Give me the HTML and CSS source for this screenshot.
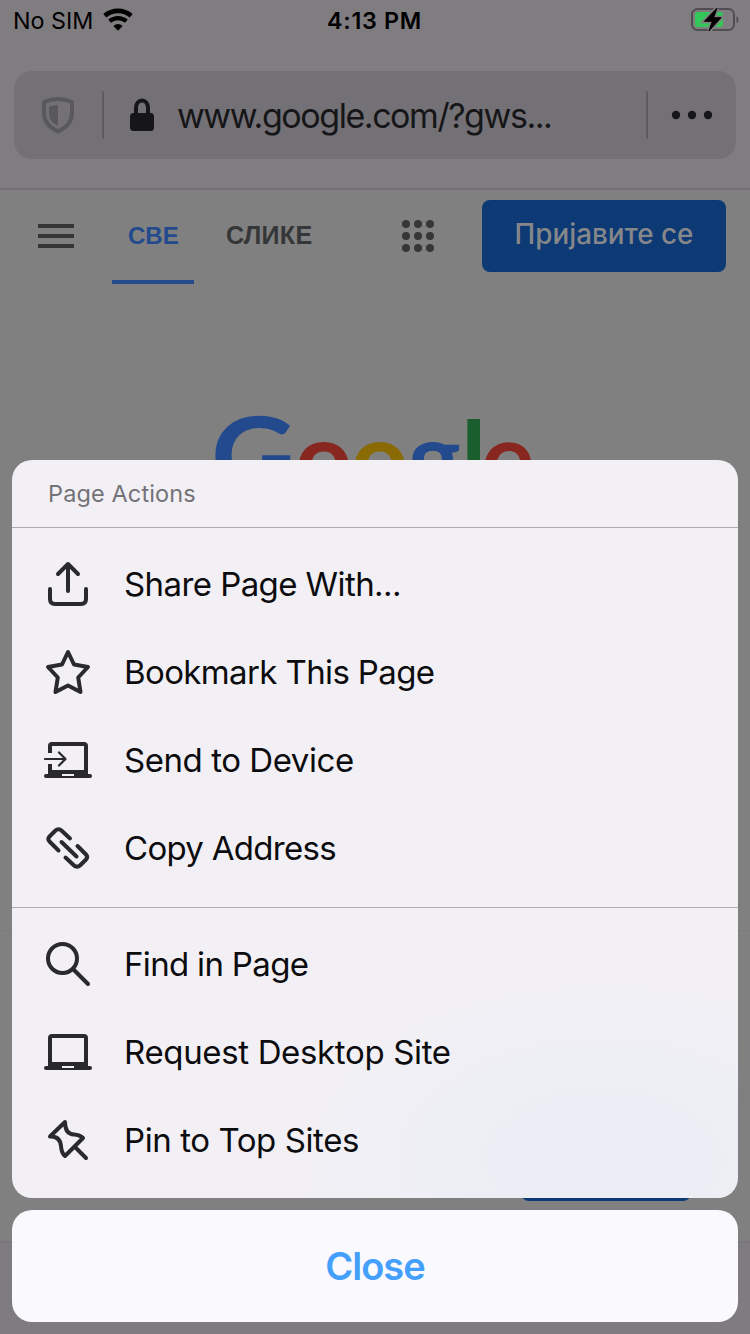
FILE: index.html
```html
<!DOCTYPE html>
<html lang="en">
<head>
<meta charset="utf-8">
<title>Page Actions</title>
<link rel="stylesheet" href="styles.css">
</head>
<body>
<div class="screen">
  <header class="browser">
    <div class="status">
      <div class="carrier"><span>No SIM</span>
        <svg width="32" height="24" viewBox="0 0 32 24"><path d="M1.8 7.800a20 20 0 0 1 26.400 0" fill="none" stroke="#000" stroke-width="4.600"/><path d="M6.600 13.200a13 13 0 0 1 16.800 0" fill="none" stroke="#000" stroke-width="4.200"/><path d="M10.300 18q4.700-3.800 9.400 0L15 22.800z"/></svg>
      </div>
      <div class="clock">4:13 PM</div>
      <svg class="battery" width="50" height="26" viewBox="0 0 50 26"><rect x="2" y="1" width="42" height="21" rx="5.500" fill="none" stroke="#504e50" stroke-width="2"/><path d="M46.500 8q2 1 2 3.500t-2 3.500z" fill="#504e50"/><rect x="5" y="4" width="28" height="15" rx="3" fill="#32c759"/><path d="M27 .200L14.500 13.200h8L19 22.800 31 9.800h-7.500z" fill="#000" stroke="#807d80" stroke-width="4" paint-order="stroke"/><path d="M27 .200L14.500 13.200h8L19 22.800 31 9.800h-7.500z" stroke="#000"/></svg>
    </div>
    <div class="urlbar">
      <svg class="shield" width="34" height="38" viewBox="0 0 34 38"><path d="M17 3Q10 3 3 6v11q0 12 14 18.500Q31 29 31 17V6q-7-3-14-3z" fill="none" stroke="#59585b" stroke-width="4" stroke-linejoin="round"/><path d="M17 9q-4.500.200-9 1.500V18q0 7.500 9 12z" fill="#59585b"/></svg>
      <i class="bar"></i>
      <svg class="lock" width="24" height="34" viewBox="0 0 24 34"><rect y="15" width="24" height="18" rx="3.500" fill="#161618"/><path d="M6 16V9.500a6 7 0 0 1 12 0V16" fill="none" stroke="#161618" stroke-width="4"/></svg>
      <span class="url">www.google.com/?gws...</span>
      <i class="bar"></i>
      <svg width="42" height="10" viewBox="0 0 42 10" fill="#161618"><circle cx="5" cy="5" r="4.200"/><circle cx="21" cy="5" r="4.200"/><circle cx="37" cy="5" r="4.200"/></svg>
    </div>
  </header>
  <main class="page">
    <nav class="nav">
      <svg class="burger" width="36" height="24" viewBox="0 0 36 24" fill="#353638"><path d="M0 0h36v4H0zM0 10h36v4H0zM0 20h36v4H0z"/></svg>
      <span class="tab active">СВЕ</span>
      <span class="tab images">СЛИКЕ</span>
      <svg class="apps" width="32" height="32" viewBox="0 0 32 32" fill="#353638"><circle cx="4" cy="4" r="4"/><circle cx="16" cy="4" r="4"/><circle cx="28" cy="4" r="4"/><circle cx="4" cy="16" r="4"/><circle cx="16" cy="16" r="4"/><circle cx="28" cy="16" r="4"/><circle cx="4" cy="28" r="4"/><circle cx="16" cy="28" r="4"/><circle cx="28" cy="28" r="4"/></svg>
      <span class="signin">Пријавите се</span>
    </nav>
    <svg class="logo" width="330" height="130" viewBox="210 400 330 130"><text class="cap" y="494" textLength="85" lengthAdjust="spacingAndGlyphs" x="211" fill="#234a8c">G</text><text y="494" x="295" fill="#87271f">o</text><text y="494" x="351" fill="#8a6a05">o</text><text y="494" x="408" fill="#234a8c">g</text><text class="stem" y="494" x="461" fill="#1b5e2e">l</text><text y="494" x="481" fill="#87271f">e</text></svg>
    <footer class="foot"><div class="consent"></div></footer>
  </main>
  <div class="toolbar"></div>

  <div class="overlay">
    <section class="sheet">
      <h1 class="title">Page Actions</h1>
      <ul class="group first">
        <li class="row"><svg class="icon" viewBox="0 0 48 48"><path d="M24 31V4M14 14L24 4l10 10M6 29v10q0 5 5 5h26q5 0 5-5V29"/></svg><span class="share">Share Page With...</span></li>
        <li class="row"><svg class="icon" viewBox="0 0 48 48"><path d="M24 4l6 12.500 14 2.500-9.800 10.500L36.500 44 24 37.500 11.500 44l2.300-14.500L4 19l14-2.500z"/></svg><span class="bookmark">Bookmark This Page</span></li>
        <li class="row"><svg class="icon" viewBox="0 0 48 48"><path class="square" d="M6 17V10q0-2 2-2h32q2 0 2 2v28M6 28v10"/><path d="M2 40h44"/><path class="base" d="M4 34h40v6H4z"/><path class="slot" d="M18 38h12v2H18z"/><path class="thin" d="M1 23h20M15 16.500l6.500 6.500-6.500 6.500"/></svg><span class="send">Send to Device</span></li>
        <li class="row"><svg class="icon" viewBox="0 0 48 48"><path d="M14.500 26.500L5.500 17.500q-2.500-2.500 0-5l5.500-5.500q3.500-3.500 7 0L26 14.500M33.500 22l8.500 8.500q2.500 2.500 0 5L36.500 41q-3.500 3.500-7 0L21.500 33.500M17.500 18L32.500 32.500"/></svg><span class="copy">Copy Address</span></li>
      </ul>
      <ul class="group">
        <li class="row"><svg class="icon" viewBox="0 0 48 48"><circle cx="18.500" cy="18.500" r="14.500"/><path d="M29 29l15 15"/></svg><span class="find">Find in Page</span></li>
        <li class="row"><svg class="icon" viewBox="0 0 48 48"><path class="square" d="M6 38V10q0-2 2-2h32q2 0 2 2v28"/><path d="M2 40h44"/><path class="base" d="M4 34h40v6H4z"/><path class="slot" d="M18 38h12v2H18z"/></svg><span class="desktop">Request Desktop Site</span></li>
        <li class="row"><svg class="icon" viewBox="0 0 48 48"><path d="M21 6L6 20.500q10-.500 11 9.500.500 7 4 10L39 22q-3-3-9-3.500Q21 18 21 6zM31 31l11 11"/></svg><span class="pin">Pin to Top Sites</span></li>
      </ul>
    </section>
    <button class="close">Close</button>
  </div>
</div>
</body>
</html>
```
FILE: styles.css
```css
* { box-sizing: border-box; }
body { margin: 0; font-family: Inter, "Noto Sans", sans-serif; }
svg { display: block; flex: none; }
.screen { position: relative; width: 750px; height: 1334px; overflow: hidden; display: flex; flex-direction: column; background: #808080; }
.browser { height: 190px; background: #807d80; border-bottom: 2px solid #737176; }
.status { height: 71px; padding: 8px 10px 0 13px; display: grid; grid-template-columns: 1fr auto 1fr; align-items: start; color: #000; font-size: 23.3px; line-height: 26px; }
.carrier { display: flex; gap: 10px; }
.clock { font-weight: 600; letter-spacing: .7px; margin-right: 4px; }
.battery { justify-self: end; }
.urlbar { height: 88px; margin: 0 14px; padding-left: 27px; border-radius: 18px; background: #737176; display: flex; align-items: center; }
.bar { width: 2px; height: 48px; background: #5d5c60; border-radius: 1px; }
.shield { margin-right: 27px; }
.lock { margin: 0 23px 0 26px; }
.url { width: 469px; font-size: 34px; letter-spacing: -1.45px; color: #161618; white-space: nowrap; }
.urlbar svg:last-child { margin-left: 23px; }
.page { flex: 1; min-height: 0; display: flex; flex-direction: column; }
.nav { height: 94px; display: flex; align-items: flex-start; padding: 0 24px 0 38px; font-family: "Liberation Sans", sans-serif; }
.burger { margin: 34px 38px 0 0; }
.tab { height: 94px; padding: 0 16px; line-height: 91px; font-size: 24px; font-weight: 700; color: #353638; }
.active { width: 82px; color: #234a8c; border-bottom: 4px solid #234a8c; margin-right: 16px; }
.images { font-size: 25px; letter-spacing: .3px; }
.apps { margin: 30px 0 0 auto; }
.signin { width: 244px; height: 72px; margin: 10px 0 0 48px; border-radius: 8px; background: #0d3975; color: #868789; font: 500 27.8px/69px Inter, sans-serif; text-align: center; white-space: nowrap; }
.logo { margin: 116px 0 0 210px; font-family: Lato, sans-serif; font-size: 100px; font-weight: 700; }
.cap { font-size: 108px; }
.stem { font-size: 102px; }
.foot { margin-top: 400px; height: 313px; border-top: 1px solid #7c7a7c; border-bottom: 2px solid #79777a; display: flex; align-items: flex-start; justify-content: flex-end; padding: 198px 59px 0 0; }
.consent { width: 170px; height: 72px; border-radius: 8px; background: #0d3975; }
.toolbar { height: 91px; background: #7f7c7f; }
.overlay { position: absolute; left: 12px; right: 12px; bottom: 12px; display: flex; flex-direction: column; gap: 12px; }
.sheet { height: 738px; border-radius: 20px; overflow: hidden; background: radial-gradient(ellipse 300px 180px at 590px 700px, #ecedf5, #eeeff5 60%, transparent), #f2f0f5; }
.title { margin: 0; height: 68px; padding-left: 36px; border-bottom: 1px solid #adabae; font-size: 23.5px; line-height: 68px; font-weight: 400; letter-spacing: .12px; color: #737277; }
.group { list-style: none; margin: 0; padding: 12px 0 14px; }
.first { padding-bottom: 15px; border-bottom: 1px solid #adabae; }
.row { height: 88px; display: flex; align-items: center; gap: 32px; padding-left: 32px; font-size: 33px; color: #0c0c0e; white-space: nowrap; }
.share { letter-spacing: -.58px; }
.bookmark { letter-spacing: -.62px; }
.send { letter-spacing: -.45px; }
.copy { letter-spacing: -.7px; }
.find { letter-spacing: -.67px; }
.desktop { letter-spacing: -.35px; }
.pin { letter-spacing: -.42px; }
.icon { width: 48px; height: 48px; fill: none; stroke: #2a2a2d; stroke-width: 4; stroke-linecap: round; stroke-linejoin: round; }
.icon .square { stroke-linecap: butt; }
.icon .base { fill: #2a2a2d; stroke: none; }
.icon .slot { fill: #f2f0f5; stroke: none; }
.icon .thin { stroke-width: 2.2; }
.close { height: 112px; border: 0; border-radius: 20px; background: #faf9fd; font: 600 38px/112px Inter, sans-serif; letter-spacing: -1px; color: #459ffc; padding: 0; }
```
